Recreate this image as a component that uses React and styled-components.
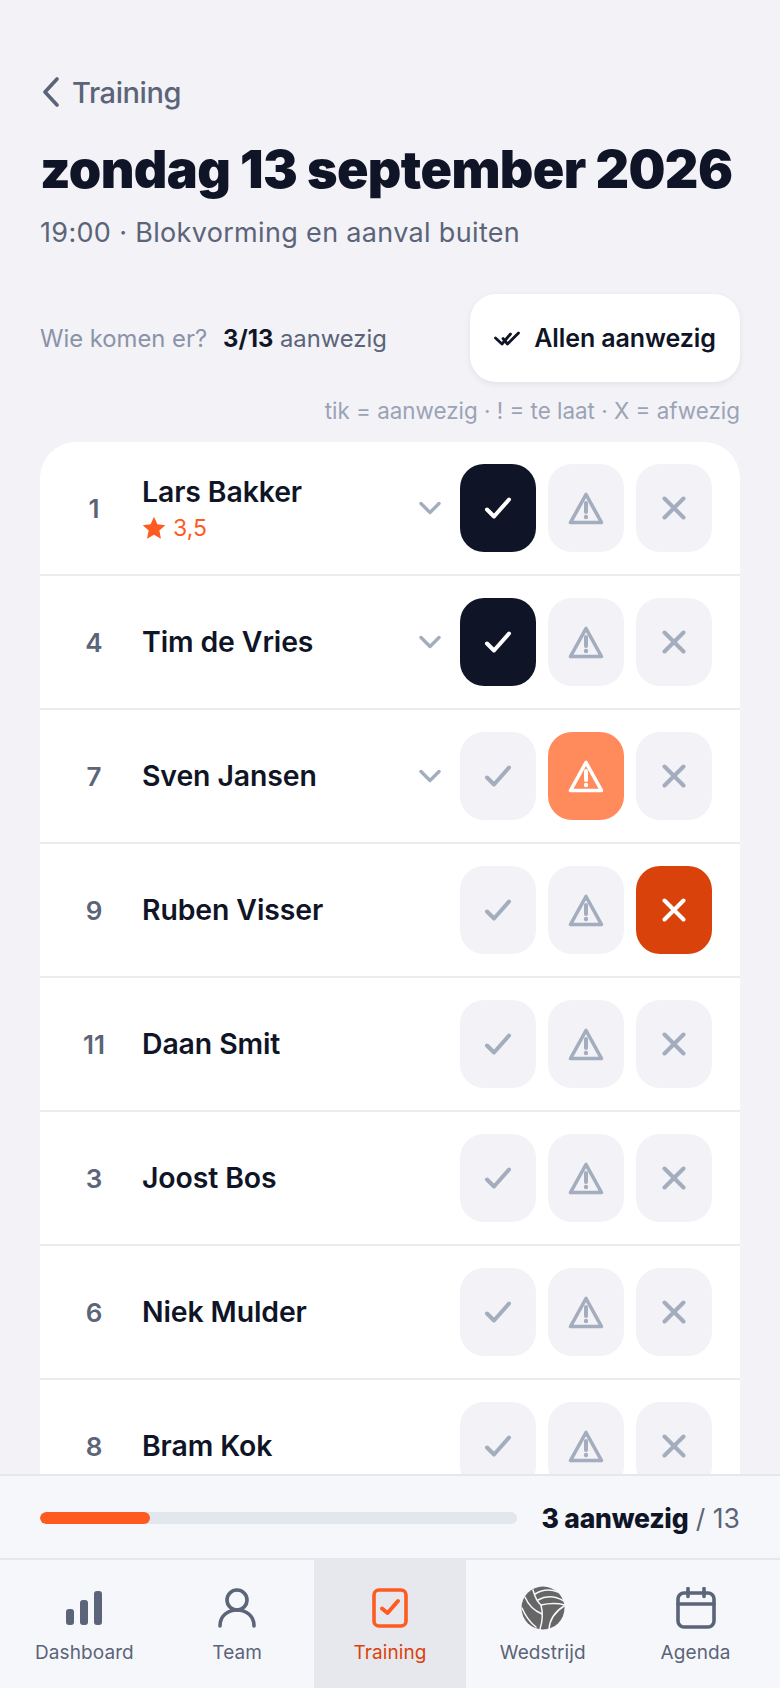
import React from 'react'
import styled, { createGlobalStyle } from 'styled-components'

const Global = createGlobalStyle`
  html, body { margin: 0; padding: 0; background: #f2f2f7; }
  body { font-family: Inter, "Liberation Sans", sans-serif; }
  * { box-sizing: border-box; }
`

const Screen = styled.div`
  width: 780px;
  height: 1688px;
  display: flex;
  flex-direction: column;
  overflow: hidden;
  background: #f2f2f7;
`

const Scroll = styled.main`
  flex: 1;
  min-height: 0;
  overflow: hidden;
  padding: 72px 40px 0;
`

const Back = styled.a`
  display: flex;
  align-items: center;
  gap: 10px;
  height: 40px;
  color: #5b6478;
  font-size: 29px;
  font-weight: 500;
  letter-spacing: -0.4px;
`

const Title = styled.h1`
  margin: 24px 0 0;
  color: #0f1526;
  font-size: 52px;
  line-height: 68px;
  font-weight: 900;
  letter-spacing: -0.6px;
  white-space: nowrap;
`

const Sub = styled.p`
  margin: 9px 0 0;
  color: #5b6478;
  font-size: 27px;
  line-height: 40px;
  letter-spacing: 0.33px;
`

const ActionRow = styled.div`
  margin-top: 41px;
  display: flex;
  align-items: center;
  justify-content: space-between;
`

const Question = styled.div`
  display: flex;
  gap: 16px;
  font-size: 23.8px;
  color: #8a93a8;
`

const Count = styled.span`
  color: #5b6478;
  b { color: #0f1526; font-weight: 700; }
`

const AllButton = styled.button`
  width: 270px;
  height: 88px;
  border: 0;
  border-radius: 26px;
  background: #fff;
  box-shadow: 0 2px 6px rgba(15, 21, 38, 0.07);
  display: flex;
  align-items: center;
  justify-content: center;
  gap: 14px;
  color: #0f1526;
  font: 600 25px Inter, sans-serif;
  letter-spacing: -0.1px;
`

const Hint = styled.div`
  margin-top: 14px;
  text-align: right;
  font-size: 22.4px;
  line-height: 30px;
  color: #9ba3b5;
`

const List = styled.section`
  margin-top: 16px;
  background: #fff;
  border-radius: 36px 36px 0 0;
`

const Row = styled.div`
  height: 134px;
  display: flex;
  align-items: center;
  padding: 0 28px 0 0;
  border-bottom: 2px solid #ececf0;
`

const Num = styled.div`
  width: 102px;
  padding-left: 6px;
  text-align: center;
  color: #5b6478;
  font-size: 26px;
  font-weight: 600;
`

const Info = styled.div`
  flex: 1;
  min-width: 0;
`

const Name = styled.div`
  color: #0f1526;
  font-size: 28.4px;
  line-height: 38px;
  font-weight: 600;
  letter-spacing: -0.1px;
`

const Rating = styled.div`
  margin-top: 2px;
  display: flex;
  align-items: center;
  gap: 7px;
  color: #ff5a1f;
  font-size: 23px;
  line-height: 30px;
`

const Expand = styled.div`
  width: 44px;
  margin-right: 8px;
  display: flex;
  justify-content: center;
`

const Choices = styled.div`
  display: flex;
  gap: 12px;
`

const TONES = {
  idle: { bg: '#f2f2f7', fg: '#a3adbe' },
  yes: { bg: '#0f1526', fg: '#ffffff' },
  late: { bg: '#ff8a5c', fg: '#ffffff' },
  no: { bg: '#d9420b', fg: '#ffffff' }
}

const Choice = styled.button`
  width: 76px;
  height: 88px;
  border: 0;
  padding: 0;
  border-radius: 24px;
  display: flex;
  align-items: center;
  justify-content: center;
  background: ${p => TONES[p.$tone].bg};
  color: ${p => TONES[p.$tone].fg};
`

const Footer = styled.footer`
  background: #f6f7fb;
`

const ProgressBar = styled.div`
  height: 84px;
  padding: 2px 40px 0;
  display: flex;
  align-items: center;
  gap: 24px;
  border-top: 2px solid #e6e7ec;
`

const Track = styled.div`
  flex: 1;
  height: 12px;
  border-radius: 6px;
  background: #e2e6ed;
  overflow: hidden;
`

const Fill = styled.div`
  height: 100%;
  border-radius: 6px;
  background: #ff5a1f;
`

const Total = styled.div`
  font-size: 26.5px;
  color: #5b6478;
  white-space: nowrap;
  b { color: #0f1526; font-weight: 800; letter-spacing: -0.2px; }
`

const Nav = styled.nav`
  height: 130px;
  padding: 0 8px;
  display: grid;
  grid-template-columns: repeat(5, 1fr);
  border-top: 2px solid #e6e7ec;
`

const NavItem = styled.a`
  display: flex;
  flex-direction: column;
  align-items: center;
  padding-top: 26px;
  gap: 10px;
  font-size: 19px;
  line-height: 26px;
  letter-spacing: 0.1px;
  color: ${p => (p.$active ? '#d9420b' : '#5b6478')};
  background: ${p => (p.$active ? '#e7e8ed' : 'transparent')};
`

const IconBox = styled.span`
  height: 44px;
  display: flex;
  align-items: center;
  justify-content: center;
`

const ChevronLeft = () => (
  <svg width='22' height='30' viewBox='0 0 22 30' fill='none' stroke='#5b6478' strokeWidth='3.6' strokeLinecap='round' strokeLinejoin='round'>
    <path d='M17 2 5 15l12 13' />
  </svg>
)

const DoubleCheck = () => (
  <svg width='26' height='15' viewBox='0 0 26 15' fill='none' stroke='#0f1526' strokeWidth='2.8' strokeLinecap='round' strokeLinejoin='round'>
    <path d='M1.5 7 8 13 16.500 3' />
    <path d='M9 7.500 13.500 13 24.500 2' />
  </svg>
)

const Check = () => (
  <svg width='28' height='24' viewBox='0 0 28 24' fill='none' stroke='currentColor' strokeWidth='4' strokeLinecap='round' strokeLinejoin='round'>
    <path d='M3 13.500 10 20.500 25 3.500' />
  </svg>
)

const Warn = () => (
  <svg width='36' height='34' viewBox='0 0 36 34' fill='none' stroke='currentColor'>
    <path d='M18 3.500 2.500 31.500h31z' strokeWidth='3.6' strokeLinejoin='round' />
    <path d='M18 12v9' strokeWidth='4' strokeLinecap='round' />
    <circle cx='18' cy='26' r='2.200' fill='currentColor' stroke='none' />
  </svg>
)

const Cross = () => (
  <svg width='24' height='24' viewBox='0 0 24 24' fill='none' stroke='currentColor' strokeWidth='4' strokeLinecap='round'>
    <path d='M2.500 2.500l19 19M21.500 2.500l-19 19' />
  </svg>
)

const ChevronDown = () => (
  <svg width='22' height='14' viewBox='0 0 22 14' fill='none' stroke='#a3adbe' strokeWidth='3.4' strokeLinecap='round' strokeLinejoin='round'>
    <path d='M2 2.500l9 9 9-9' />
  </svg>
)

const Star = () => (
  <svg width='24' height='24' viewBox='0 0 22 22' fill='#ff5a1f'>
    <path d='M11 .8l3.100 6.800 7.200.8-5.400 5 1.500 7.400L11 17.100l-6.400 3.700 1.500-7.400-5.400-5 7.200-.8z' />
  </svg>
)

const BarsIcon = () => (
  <svg width='36' height='34' viewBox='0 0 36 34' fill='#5b6478'>
    <rect x='0' y='18' width='8' height='16' rx='3' />
    <rect x='14' y='9' width='8' height='25' rx='3' />
    <rect x='28' y='0' width='8' height='34' rx='3' />
  </svg>
)

const UserIcon = () => (
  <svg width='38' height='40' viewBox='0 0 38 40' fill='none' stroke='#5b6478' strokeWidth='3.6' strokeLinecap='round'>
    <circle cx='19' cy='12' r='10' />
    <path d='M2 38c0-10 7.500-16 17-16s17 6 17 16' />
  </svg>
)

const TaskIcon = () => (
  <svg width='36' height='40' viewBox='0 0 36 40' fill='none' stroke='#ff5a1f' strokeWidth='3.6' strokeLinecap='round' strokeLinejoin='round'>
    <rect x='2' y='2' width='32' height='36' rx='5' />
    <path d='M10 20.500 15.500 25 26 13' strokeWidth='4' />
  </svg>
)

const BallIcon = () => (
  <svg width='44' height='44' viewBox='5 5 44 44' fill='none' stroke='#f6f7fb' strokeWidth='1.500' strokeLinecap='round'>
    <circle cx='27' cy='27' r='21.500' fill='#666' stroke='none' />
    <path d='M17 9Q20 20 25 24Q38 21 49 24' />
    <path d='M25 24Q28 36 24 48' />
    <path d='M19 13Q30 6 42 11' />
    <path d='M22 19Q34 12 48 20' />
    <path d='M9 16Q14 28 26 33' />
    <path d='M6 27Q11 39 20 46' />
    <path d='M33 48Q34 34 48 25' />
  </svg>
)

const CalendarIcon = () => (
  <svg width='40' height='42' viewBox='0 0 40 42' fill='none' stroke='#5b6478' strokeWidth='3.600' strokeLinecap='round'>
    <rect x='2' y='6' width='36' height='34' rx='6' />
    <path d='M2 17h36M12 1.500v8M28 1.500v8' />
  </svg>
)

const PLAYERS = [
  { number: 1, name: 'Lars Bakker', rating: '3,5', state: 'yes', expandable: true },
  { number: 4, name: 'Tim de Vries', state: 'yes', expandable: true },
  { number: 7, name: 'Sven Jansen', state: 'late', expandable: true },
  { number: 9, name: 'Ruben Visser', state: 'no' },
  { number: 11, name: 'Daan Smit' },
  { number: 3, name: 'Joost Bos' },
  { number: 6, name: 'Niek Mulder' },
  { number: 8, name: 'Bram Kok' }
]

const NAV = [
  { label: 'Dashboard', icon: <BarsIcon /> },
  { label: 'Team', icon: <UserIcon /> },
  { label: 'Training', icon: <TaskIcon />, active: true },
  { label: 'Wedstrijd', icon: <BallIcon /> },
  { label: 'Agenda', icon: <CalendarIcon /> }
]

const tone = (state, value) => (state === value ? value : 'idle')

export default function App () {
  return (
    <Screen>
      <Global />
      <Scroll>
        <Back>
          <ChevronLeft />
          Training
        </Back>
        <Title>zondag 13 september 2026</Title>
        <Sub>19:00 · Blokvorming en aanval buiten</Sub>
        <ActionRow>
          <Question>
            <span>Wie komen er?</span>
            <Count><b>3/13</b> aanwezig</Count>
          </Question>
          <AllButton>
            <DoubleCheck />
            Allen aanwezig
          </AllButton>
        </ActionRow>
        <Hint>tik = aanwezig · ! = te laat · X = afwezig</Hint>
        <List>
          {PLAYERS.map(({ number, name, rating, state, expandable }) => (
            <Row key={number}>
              <Num>{number}</Num>
              <Info>
                <Name>{name}</Name>
                {rating && <Rating><Star />{rating}</Rating>}
              </Info>
              {expandable && <Expand><ChevronDown /></Expand>}
              <Choices>
                <Choice $tone={tone(state, 'yes')}><Check /></Choice>
                <Choice $tone={tone(state, 'late')}><Warn /></Choice>
                <Choice $tone={tone(state, 'no')}><Cross /></Choice>
              </Choices>
            </Row>
          ))}
        </List>
      </Scroll>
      <Footer>
        <ProgressBar>
          <Track><Fill style={{ width: `${(3 / 13) * 100}%` }} /></Track>
          <Total><b>3 aanwezig</b> / 13</Total>
        </ProgressBar>
        <Nav>
          {NAV.map(({ label, icon, active }) => (
            <NavItem key={label} $active={active}>
              <IconBox>{icon}</IconBox>
              {label}
            </NavItem>
          ))}
        </Nav>
      </Footer>
    </Screen>
  )
}
